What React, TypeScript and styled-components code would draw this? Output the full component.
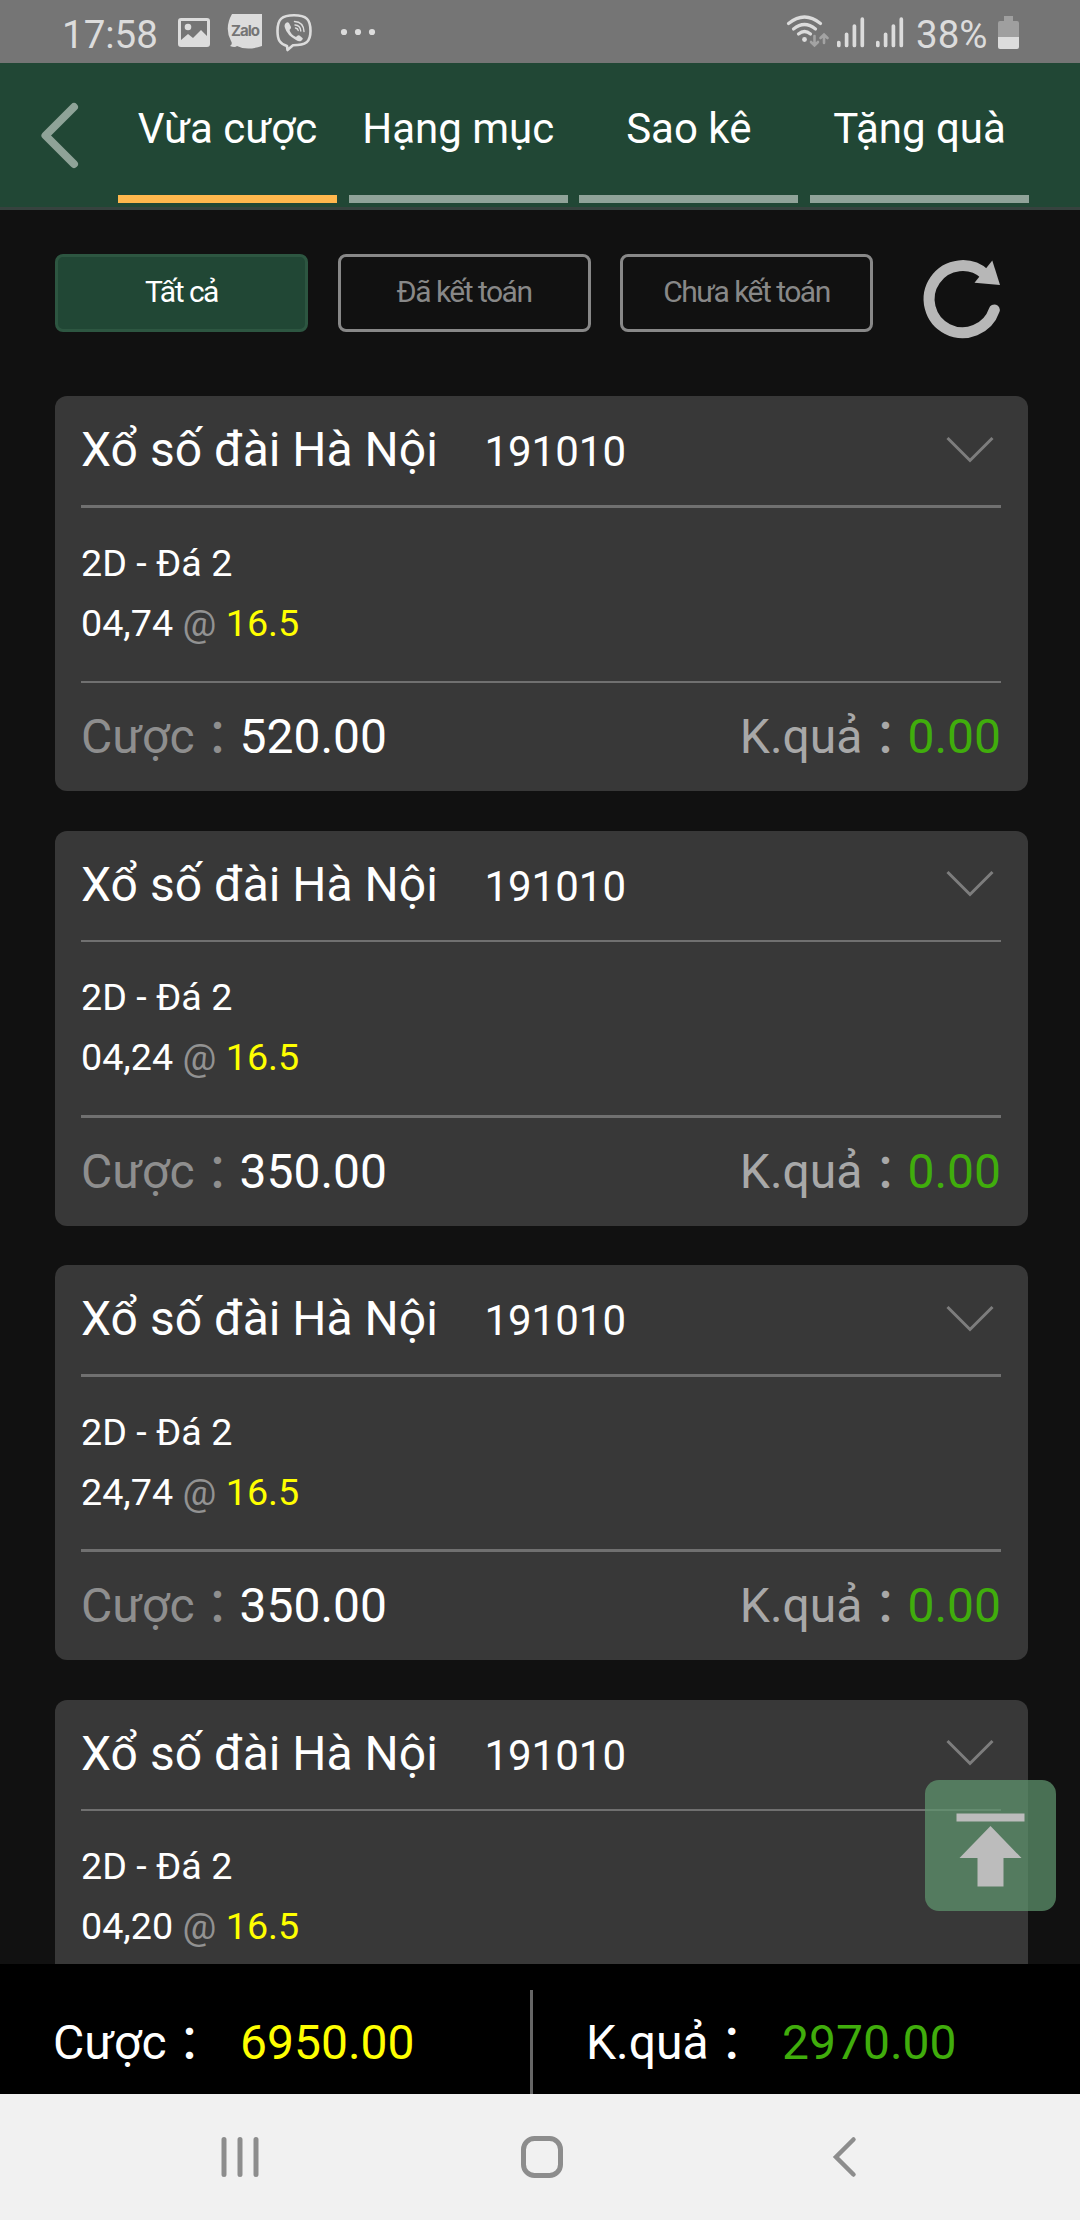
import React from "react";
import styled, { createGlobalStyle } from "styled-components";

const GlobalStyle = createGlobalStyle`
  * { box-sizing: border-box; }
  body { margin: 0; background: #111; }
  button { font: inherit; padding: 0; margin: 0; border: 0; background: none; }
`;

const Screen = styled.div`
  display: flex;
  flex-direction: column;
  width: 1080px;
  height: 2220px;
  overflow: hidden;
  background: #111;
  color: #fff;
  font-family: Roboto, "Noto Sans CJK JP", sans-serif;
`;

const StatusBar = styled.div`
  flex: none;
  display: flex;
  justify-content: space-between;
  height: 63px;
  padding: 0 61px 0 61px;
  background: #757575;
  color: #dcdcdc;
  font-size: 38.5px;
  line-height: 70px;
`;

const StatusGroup = styled.div`
  display: flex;
  svg { display: block; flex: none; }
`;

const StatusText = styled.span<{ $width: number }>`
  width: ${(p) => p.$width}px;
  padding-left: 1px;
  white-space: nowrap;
`;

const Header = styled.header`
  flex: none;
  display: flex;
  height: 147px;
  padding-right: 51px;
  background: #214735;
  border-bottom: 3px solid #36423e;
`;

const BackButton = styled.button`
  width: 118px;
  height: 144px;
  svg { display: block; }
`;

const Tabs = styled.nav`
  flex: 1;
  display: grid;
  grid-template-columns: repeat(4, 1fr);
  column-gap: 11.67px;
  height: 140px;
`;

const Tab = styled.button<{ $active?: boolean }>`
  color: #fff;
  font-size: 42px;
  line-height: 49px;
  padding-bottom: 1px;
  white-space: nowrap;
  border-bottom: 8px solid ${(p) => (p.$active ? "#ffb74d" : "#90a399")};
`;

const Filters = styled.div`
  flex: none;
  display: flex;
  gap: 29.5px;
  padding: 44px 0 64.4px 55px;
`;

const FilterButton = styled.button<{ $active?: boolean }>`
  width: 253px;
  height: 78px;
  border: 3px solid ${(p) => (p.$active ? "#2d5641" : "#888")};
  border-radius: 8px;
  background: ${(p) => (p.$active ? "#214735" : "transparent")};
  color: ${(p) => (p.$active ? "#fff" : "#888")};
  font-size: 30px;
  line-height: 35px;
  letter-spacing: -1.5px;
  padding-bottom: 4px;
`;

const RefreshButton = styled.button`
  height: 78px;
  margin-left: 15.5px;
  svg { display: block; overflow: visible; }
`;

const List = styled.main`
  flex: 1;
  min-height: 0;
  overflow: hidden;
  display: flex;
  flex-direction: column;
  gap: 39.6px;
  padding: 0 52px 0 55px;
`;

const Card = styled.article`
  flex: none;
  height: 394.8px;
  padding: 0 27px 0 26px;
  border-radius: 12px;
  background: #383838;
`;

const Divider = styled.div`
  height: 2.5px;
  background: #707070;
`;

const CardHead = styled.div`
  display: flex;
  align-items: baseline;
  height: 109px;
  svg { display: block; margin-left: auto; margin-right: 7px; align-self: flex-start; margin-top: 39.7px; }
`;

const Title = styled.h2`
  margin: 0;
  width: 403.4px;
  font-size: 48px;
  font-weight: 400;
  line-height: 108.8px;
  white-space: nowrap;
`;

const Issue = styled.span`
  font-size: 42px;
`;

const CardBody = styled.div`
  height: 172.72px;
  padding-top: 25.2px;
  font-size: 37.7px;
  line-height: 60px;
`;

const At = styled.span`
  color: #929292;
`;

const Odds = styled.span`
  color: #ff0;
`;

const CardFoot = styled.div`
  display: flex;
  justify-content: space-between;
  font-size: 48px;
  line-height: 107.8px;
`;

const Label = styled.span<{ $tone: string }>`
  color: ${(p) => p.$tone};
`;

const Colon = styled.span`
  display: inline-block;
  width: 45px;
  line-height: 48px;
  text-indent: -1px;
  vertical-align: -2px;
`;

const Win = styled.span`
  color: #40ad0c;
`;

const Totals = styled.footer`
  flex: none;
  display: flex;
  height: 130px;
  padding-top: 26px;
  background: #000;
  font-size: 48px;
  line-height: 106px;
`;

const Total = styled.div<{ $left: number; $label: number }>`
  display: flex;
  padding-left: ${(p) => p.$left}px;
  ${Label} { width: ${(p) => p.$label}px; }
`;

const BetTotal = styled(Total)`
  width: 533px;
  border-right: 3px solid #666;
`;

const NavBar = styled.div`
  flex: none;
  height: 126px;
  background: #f1f1f1;
  svg { display: block; }
`;

const ToTop = styled.button`
  position: absolute;
  left: 925px;
  top: 1780px;
  width: 131px;
  height: 131px;
  border-radius: 14px;
  background: rgba(96, 150, 111, 0.72);
  svg { display: block; }
`;

const SignalBars = () => (
  <svg width="39" height="63" viewBox="0 0 39 63" stroke="#dcdcdc" strokeWidth="3.700" strokeLinecap="round">
    <path d="M1.800 42.500V45.500M9.600 34.300V45.500M17.400 26V45.500M25.300 19.200V45.500" />
  </svg>
);

const LeftIcons = () => (
  <svg width="210" height="63" viewBox="170 0 210 63" fill="#dcdcdc">
    <path fillRule="evenodd" d="M181 18H207Q210 18 210 21V44Q210 47 207 47H181Q178 47 178 44V21Q178 18 181 18ZM181 21V40L188 34L193 38L201 30L207 36V21Z" />
    <circle cx="188" cy="27" r="3.300" />
    <path d="M232 14H262V46Q247 51 237 46Q235 48 230 46Q233 44 231 41Q224 28 232 14Z" />
    <text x="245.500" y="36" fill="#757575" fontSize="15" fontWeight="700" fontFamily="Inter, sans-serif" textAnchor="middle" textLength="29">Zalo</text>
    <path d="M287 46C280 44 277.500 40 277.500 31C277.500 19 282 15.300 294 15.300C306 15.300 310.500 19 310.500 31C310.500 42 306 45.300 293 45.300L287.500 50Z" fill="none" stroke="#dcdcdc" strokeWidth="2.600" strokeLinejoin="round" />
    <path d="M285 24Q287 21 289 23L291 27Q291.500 28 289.500 30Q291 35 296 37Q298 34.500 299.500 35.500L302.500 38Q303.500 39 301 41Q299 42 296 40Q287 35 285 28Q284 26 285 24Z" />
    <path d="M294.500 21.500Q303.500 22 304 31.500M295 25Q300.500 25.500 300.800 31M295.500 28Q298 28.500 298.200 30.500" fill="none" stroke="#dcdcdc" strokeWidth="1.400" strokeLinecap="round" />
    <circle cx="344" cy="32" r="3.100" /><circle cx="358" cy="32" r="3.100" /><circle cx="372" cy="32" r="3.100" />
  </svg>
);

const Wifi = () => (
  <svg width="52" height="63" viewBox="785 0 52 63" fill="none" stroke="#dcdcdc" strokeWidth="3.200" strokeLinecap="round">
    <path d="M788.500 23.500Q804.500 10.500 820.500 23.500M793.500 29Q804.500 20 815.500 29M798.500 34Q804.500 29 810.500 34" />
    <circle cx="804.500" cy="39.500" r="2.400" fill="#dcdcdc" stroke="none" />
    <path d="M814.500 36V45M811 42L814.500 45.500L818 42M824 43V34.500M820.500 38L824 34.500L827.500 38" stroke="#a3a3a3" strokeWidth="2.600" />
  </svg>
);

const Battery = () => (
  <svg width="21" height="63" viewBox="0 0 21 63">
    <path d="M6 16H15V21H19Q21 21 21 23V38H0V23Q0 21 2 21H6Z" fill="#9f9f9f" />
    <path d="M0 37H21V47Q21 49 19 49H2Q0 49 0 47Z" fill="#dcdcdc" />
  </svg>
);

type Bet = { numbers: string; stake?: string };

const tabs = ["Vừa cược", "Hạng mục", "Sao kê", "Tặng quà"];
const filters = ["Tất cả", "Đã kết toán", "Chưa kết toán"];
const bets: Bet[] = [
  { numbers: "04,74", stake: "520.00" },
  { numbers: "04,24", stake: "350.00" },
  { numbers: "24,74", stake: "350.00" },
  { numbers: "04,20" },
];

export default function App() {
  return (
    <Screen>
      <GlobalStyle />
      <StatusBar>
        <StatusGroup>
          <StatusText $width={109}>17:58</StatusText>
          <LeftIcons />
        </StatusGroup>
        <StatusGroup>
          <Wifi />
          <SignalBars />
          <SignalBars />
          <StatusText $width={83}>38%</StatusText>
          <Battery />
        </StatusGroup>
      </StatusBar>
      <Header>
        <BackButton aria-label="Back">
          <svg width="118" height="144" viewBox="0 63 118 144" fill="none" stroke="#8fa398" strokeWidth="8" strokeLinecap="round" strokeLinejoin="round">
            <path d="M74 107L45.500 135.500L74 164" />
          </svg>
        </BackButton>
        <Tabs>
          {tabs.map((t, i) => (
            <Tab key={t} $active={i === 0}>{t}</Tab>
          ))}
        </Tabs>
      </Header>
      <Filters>
        {filters.map((f, i) => (
          <FilterButton key={f} $active={i === 0}>{f}</FilterButton>
        ))}
        <RefreshButton aria-label="Refresh">
          <svg width="90" height="78" viewBox="918 254 90 78">
            <path d="M994.300 310A33.500 33.500 0 1 1 985.300 274.500" fill="none" stroke="#b7b7b7" strokeWidth="11" strokeLinecap="round" />
            <path d="M992.300 260.500L1000 285L974.500 282.700Z" fill="#b7b7b7" />
          </svg>
        </RefreshButton>
      </Filters>
      <List>
        {bets.map((b) => (
          <Card key={b.numbers}>
            <CardHead>
              <Title>Xổ số đài Hà Nội</Title>
              <Issue>191010</Issue>
              <svg width="48" height="28" viewBox="0 0 48 28" fill="none" stroke="#7d7d7d" strokeWidth="3">
                <path d="M1.500 2L24 24.500L46.500 2" />
              </svg>
            </CardHead>
            <Divider />
            <CardBody>
              <div>2D - Đá 2</div>
              <div>{b.numbers} <At>@</At> <Odds>16.5</Odds></div>
            </CardBody>
            <Divider />
            {b.stake && (
              <CardFoot>
                <div><Label $tone="#8e8e8e">Cược<Colon>：</Colon></Label>{b.stake}</div>
                <div><Label $tone="#a8a8a8">K.quả<Colon>：</Colon></Label><Win>0.00</Win></div>
              </CardFoot>
            )}
          </Card>
        ))}
      </List>
      <Totals>
        <BetTotal $left={53} $label={187}>
          <Label $tone="#fff">Cược<Colon>：</Colon></Label><Odds>6950.00</Odds>
        </BetTotal>
        <Total $left={53} $label={196}>
          <Label $tone="#fff">K.quả<Colon>：</Colon></Label><Win>2970.00</Win>
        </Total>
      </Totals>
      <NavBar>
        <svg width="1080" height="126" viewBox="0 2094 1080 126" fill="none" stroke="#8d8d8d" strokeWidth="5" strokeLinecap="round">
          <path d="M224 2139.500V2174.500M240 2139.500V2174.500M256 2139.500V2174.500" />
          <rect x="523.500" y="2138.500" width="37" height="37" rx="11" />
          <path d="M853.500 2139.500L836 2157L853.500 2174.500" strokeWidth="4.500" />
        </svg>
      </NavBar>
      <ToTop aria-label="Back to top">
        <svg width="131" height="131" viewBox="925 1780 131 131" fill="#bcbcbc">
          <path d="M956.500 1813.500H1024.500V1821.500H956.500ZM990.500 1826L1021.500 1858H1003.500V1886.500H977.500V1858H959.500Z" />
        </svg>
      </ToTop>
    </Screen>
  );
}
